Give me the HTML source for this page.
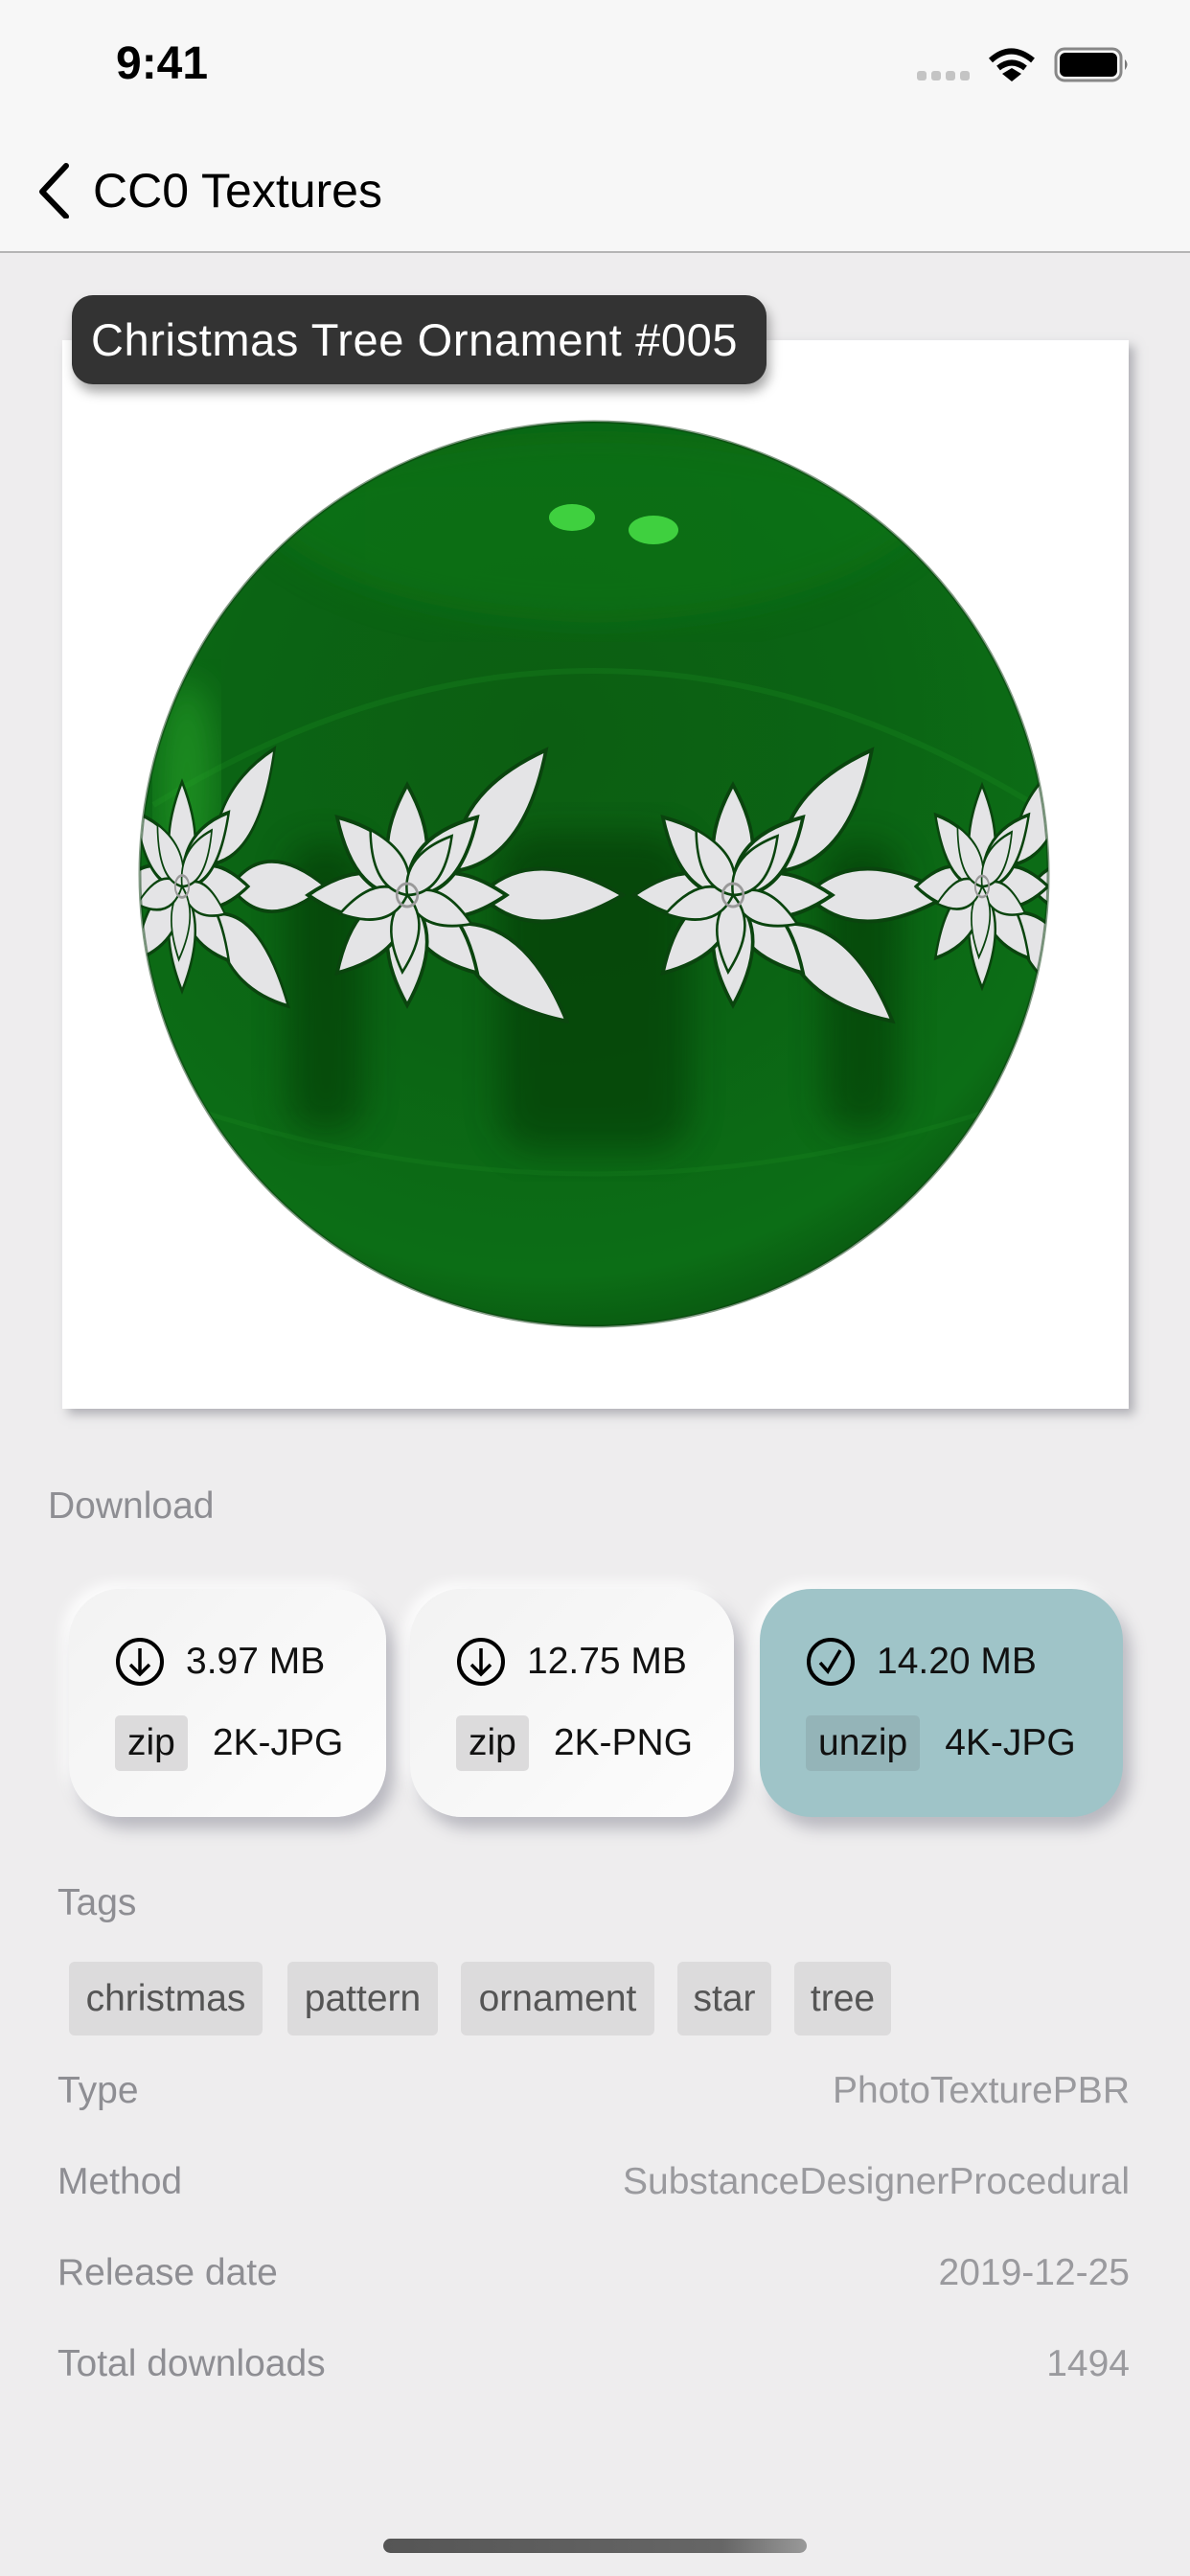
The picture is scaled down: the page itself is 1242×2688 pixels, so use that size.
<!DOCTYPE html>
<html><head><meta charset="utf-8">
<style>
*{margin:0;padding:0;box-sizing:border-box}
body{width:1242px;height:2688px;background:#eeedee;font-family:"Liberation Sans",sans-serif;position:relative;overflow:hidden}
.a{position:absolute;white-space:nowrap}
.card{position:absolute;top:1658px;height:238px;border-radius:54px;background:linear-gradient(135deg,#f2f2f2,#fdfdfd);box-shadow:8px 12px 16px rgba(120,120,135,.45),-6px -6px 14px rgba(255,255,255,.9)}
.card .r1{position:absolute;top:50px;left:48px;font-size:39px;color:#111;display:flex;align-items:center}
.card .r1 svg{margin-right:22px}
.card .r2{position:absolute;top:132px;left:48px;font-size:39px;color:#111;display:flex;align-items:center}
.tg{background:#dcdbdc;border-radius:5px;padding:8px 13px;margin-right:26px;line-height:42px}
.chip{position:absolute;top:2047px;height:77px;background:#dcdbdc;border-radius:6px;font-size:39px;color:#555;line-height:77px;text-align:center}
.lbl{font-size:39px;color:#8e8e93}
.val{font-size:39px;color:#9a9a9e;right:63px}
</style></head><body>
<div class="a" style="left:0;top:0;width:1242px;height:264px;background:#f7f7f7;border-bottom:2px solid #b5b5b5"></div>
<div class="a" style="left:121px;top:39px;font-size:48px;font-weight:bold;color:#000">9:41</div>
<svg class="a" style="left:955px;top:48px" width="230" height="42" viewBox="955 48 230 42">
<g fill="#c4c4c4"><rect x="957" y="74" width="10" height="10" rx="3"/><rect x="972" y="74" width="10" height="10" rx="3"/><rect x="987" y="74" width="10" height="10" rx="3"/><rect x="1002" y="74" width="10" height="10" rx="3"/></g>
<g fill="none" stroke="#000" stroke-width="6"><path d="M1034 63 Q1055 44 1078 63"/><path d="M1042 71 Q1056 60 1070 71"/></g>
<path d="M1046 77 L1056 71 L1066 77 L1056 85Z" fill="#000"/>
<rect x="1102" y="51" width="68" height="33" rx="9" fill="none" stroke="#888" stroke-width="3"/>
<rect x="1106" y="55" width="60" height="25" rx="6" fill="#000"/>
<path d="M1174 62 Q1179 67 1174 73Z" fill="#777"/>
</svg>
<svg class="a" style="left:36px;top:168px" width="40" height="60"><path d="M33 5 L8 32 L33 58" fill="none" stroke="#000" stroke-width="6" stroke-linecap="round" stroke-linejoin="round"/></svg>
<div class="a" style="left:97px;top:170px;font-size:50px;color:#000">CC0 Textures</div>

<div class="a" style="left:65px;top:355px;width:1113px;height:1115px;background:#fff;box-shadow:6px 6px 10px rgba(120,120,130,.5)"></div>
<svg class="a" style="left:65px;top:355px" width="1113" height="1115" viewBox="65 355 1113 1115">
<defs>
<radialGradient id="g" cx="0.45" cy="0.35" r="0.7">
<stop offset="0" stop-color="#0c5e12"/><stop offset="0.5" stop-color="#0b6414"/><stop offset="0.85" stop-color="#0c6e16"/><stop offset="1" stop-color="#08500e"/>
</radialGradient>
<filter id="bl1"><feGaussianBlur stdDeviation="18"/></filter>
<clipPath id="c"><ellipse cx="620" cy="912" rx="474" ry="472"/></clipPath>
<path id="lf" d="M0 0 Q40 -46 115 0 Q40 46 0 0Z"/>
<path id="bl" d="M0 0 Q60 -55 165 0 Q60 55 0 0Z"/>
<g id="f" fill="#e4e4e6" stroke="#0a440e" stroke-width="4">
<use href="#bl" transform="translate(55,-25) rotate(-50)"/>
<use href="#bl" transform="translate(85,0) rotate(0)"/>
<use href="#bl" transform="translate(55,30) rotate(38)"/>
<g><use href="#lf" transform="rotate(0)"/><use href="#lf" transform="rotate(45)"/><use href="#lf" transform="rotate(90)"/><use href="#lf" transform="rotate(135)"/><use href="#lf" transform="rotate(180)"/><use href="#lf" transform="rotate(225)"/><use href="#lf" transform="rotate(270)"/><use href="#lf" transform="rotate(315)"/></g>
<g transform="scale(0.7)"><use href="#lf" transform="rotate(22)"/><use href="#lf" transform="rotate(94)"/><use href="#lf" transform="rotate(166)"/><use href="#lf" transform="rotate(238)"/><use href="#lf" transform="rotate(310)"/></g>
<circle r="12" fill="none" stroke="#999" stroke-width="3"/>
</g>
</defs>
<ellipse cx="620" cy="912" rx="474" ry="472" fill="url(#g)"/>
<g clip-path="url(#c)">
<path d="M250 520 Q620 380 990 520 Q900 640 620 650 Q340 640 250 520Z" fill="#0e7a18" opacity=".5" filter="url(#bl1)"/>
<path d="M160 840 Q620 560 1080 840" fill="none" stroke="#1a8a22" stroke-width="6" opacity=".3"/>
<path d="M180 1150 Q620 1300 1060 1150" fill="none" stroke="#1a8a22" stroke-width="5" opacity=".25"/>
<g filter="url(#bl1)" opacity=".45" fill="#032a06">
<rect x="520" y="870" width="200" height="330" rx="40"/>
<rect x="300" y="880" width="80" height="300" rx="30"/>
<rect x="860" y="880" width="80" height="300" rx="30"/>
</g>
<ellipse cx="597" cy="540" rx="24" ry="14" fill="#3fd03f"/>
<ellipse cx="682" cy="553" rx="26" ry="15" fill="#3fd03f"/>
<ellipse cx="195" cy="820" rx="30" ry="110" fill="#2fb02f" opacity=".5" filter="url(#bl1)"/>
<use href="#f" transform="translate(190,925) scale(0.6,0.95)"/>
<use href="#f" transform="translate(425,934) scale(0.9,1)"/>
<use href="#f" transform="translate(765,934) scale(0.9,1)"/>
<use href="#f" transform="translate(1025,925) scale(0.6,0.92)"/>
</g>
<ellipse cx="620" cy="912" rx="474" ry="472" fill="none" stroke="#0a3a0e" stroke-width="3" opacity=".5"/>
</svg>
<div class="a" style="left:75px;top:308px;width:725px;height:93px;background:#333;border-radius:22px;box-shadow:3px 8px 12px rgba(0,0,0,.35);color:#fff;font-size:47px;letter-spacing:.6px;line-height:93px;padding-left:20px">Christmas Tree Ornament #005</div>

<div class="a lbl" style="left:50px;top:1550px">Download</div>

<div class="card" style="left:72px;width:331px">
<div class="r1"><svg width="52" height="52"><circle cx="26" cy="26" r="23" fill="none" stroke="#000" stroke-width="4"/><path d="M26 12 V38 M16 29 L26 39 L36 29" fill="none" stroke="#000" stroke-width="3.5"/></svg>3.97 MB</div>
<div class="r2"><span class="tg">zip</span>2K-JPG</div></div>
<div class="card" style="left:428px;width:338px">
<div class="r1"><svg width="52" height="52"><circle cx="26" cy="26" r="23" fill="none" stroke="#000" stroke-width="4"/><path d="M26 12 V38 M16 29 L26 39 L36 29" fill="none" stroke="#000" stroke-width="3.5"/></svg>12.75 MB</div>
<div class="r2"><span class="tg">zip</span>2K-PNG</div></div>
<div class="card" style="left:793px;width:379px;background:#9fc4c8">
<div class="r1"><svg width="52" height="52"><circle cx="26" cy="26" r="23" fill="none" stroke="#000" stroke-width="4"/><path d="M15 27 L23 36 L36 14" fill="none" stroke="#000" stroke-width="3.5"/></svg>14.20 MB</div>
<div class="r2"><span class="tg" style="background:#94b4b8">unzip</span>4K-JPG</div></div>

<div class="a lbl" style="left:60px;top:1964px">Tags</div>
<div class="chip" style="left:72px;width:202px">christmas</div>
<div class="chip" style="left:300px;width:157px">pattern</div>
<div class="chip" style="left:481px;width:202px">ornament</div>
<div class="chip" style="left:707px;width:98px">star</div>
<div class="chip" style="left:829px;width:101px">tree</div>

<div class="a lbl" style="left:60px;top:2160px">Type</div><div class="a val" style="top:2160px">PhotoTexturePBR</div>
<div class="a lbl" style="left:60px;top:2255px">Method</div><div class="a val" style="top:2255px">SubstanceDesignerProcedural</div>
<div class="a lbl" style="left:60px;top:2350px">Release date</div><div class="a val" style="top:2350px">2019-12-25</div>
<div class="a lbl" style="left:60px;top:2445px">Total downloads</div><div class="a val" style="top:2445px">1494</div>

<div class="a" style="left:400px;top:2649px;width:442px;height:15px;border-radius:8px;background:linear-gradient(90deg,#555,#666 80%,#999)"></div>
</body></html>
